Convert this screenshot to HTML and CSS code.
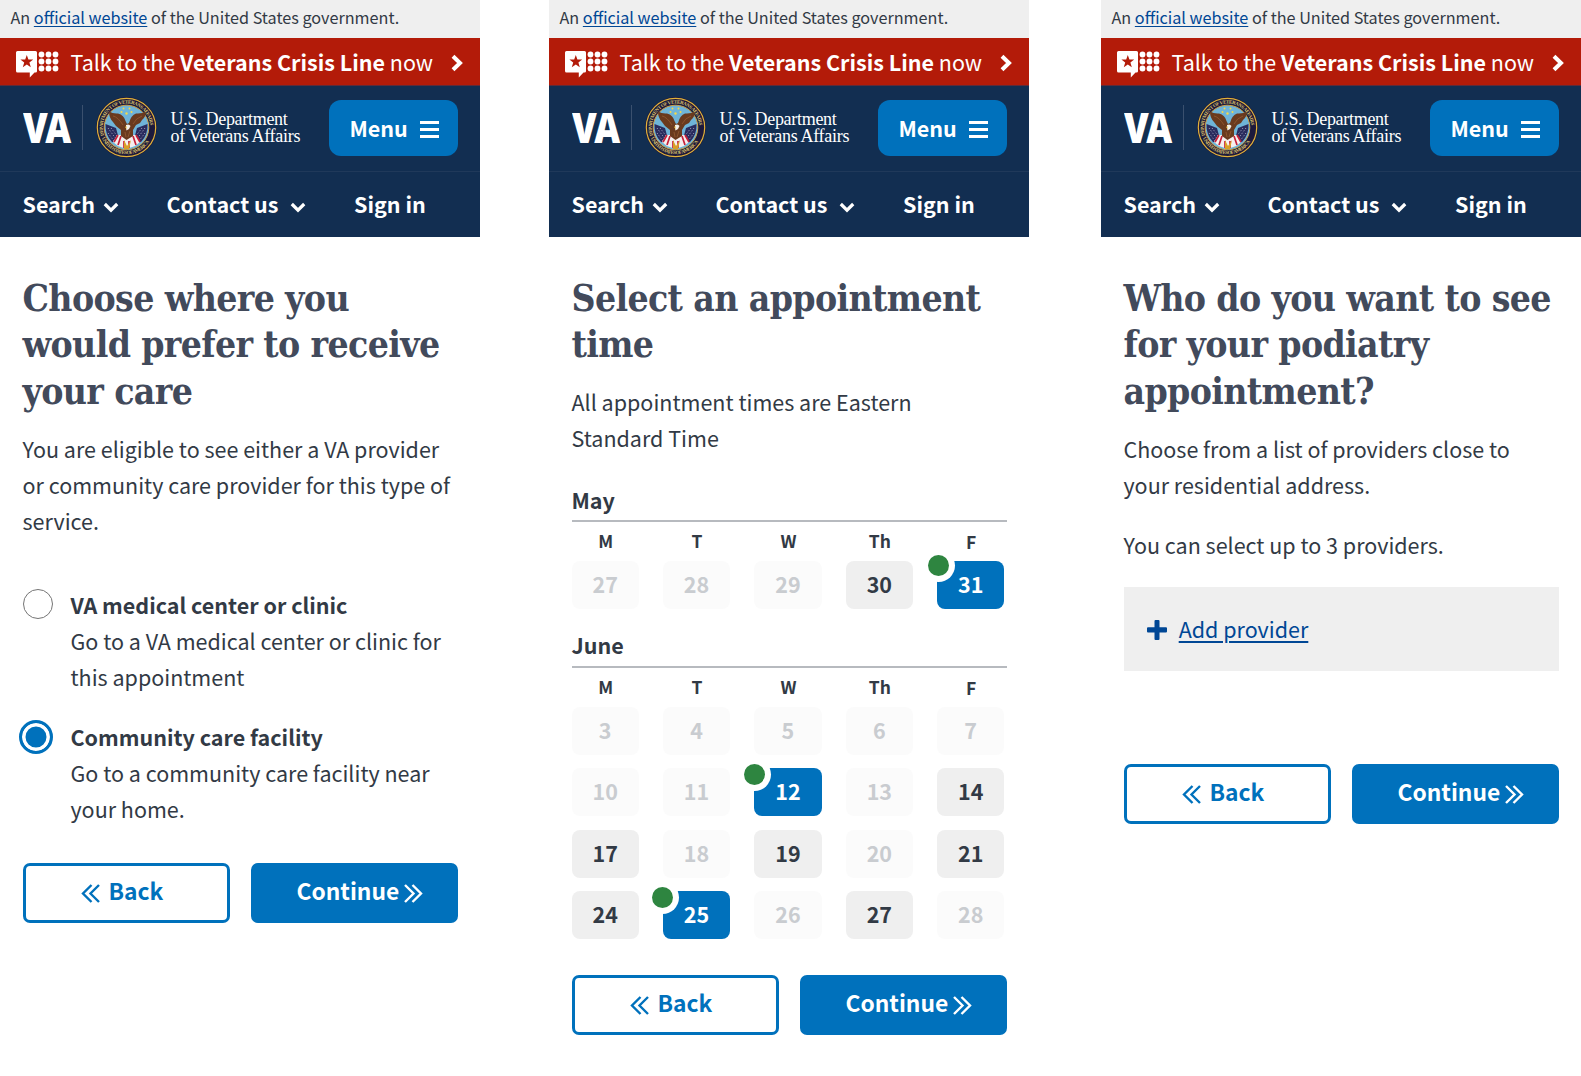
FILE: index.html
```html
<!DOCTYPE html>
<html lang="en">
<head>
<meta charset="utf-8">
<title>VA appointments</title>
<link rel="stylesheet" href="styles.css">
</head>
<body>
<svg class="sprite" aria-hidden="true">
  <defs>
    <path id="arc-top" d="M8.300 38.500A23.700 23.700 0 1 1 52.700 38.500"/>
    <path id="arc-bottom" d="M5.800 41A27 27 0 0 0 55.200 41"/>
  </defs>
  <symbol id="i-crisis" viewBox="0 0 43 27">
    <path fill="#fff" fill-rule="evenodd" d="M1.500 0H19.500Q21 0 21 1.500V20.200Q21 21.500 19.500 21.500H18.500L13.800 26.600V21.500H1.500Q0 21.500 0 20V1.500Q0 0 1.500 0ZM10.800 4L9.200 8.600H4.400L8.200 11.500L6.800 16.200L10.800 13.400L14.800 16.200L13.400 11.500L17.200 8.600H12.400Z"/>
    <g fill="#fff"><circle cx="25.500" cy="3.500" r="2.900"/><circle cx="32.500" cy="3.500" r="2.900"/><circle cx="39.500" cy="3.500" r="2.900"/><circle cx="25.500" cy="10.500" r="2.900"/><circle cx="32.500" cy="10.500" r="2.900"/><circle cx="39.500" cy="10.500" r="2.900"/><circle cx="25.500" cy="17.500" r="2.900"/><circle cx="32.500" cy="17.500" r="2.900"/><circle cx="39.500" cy="17.500" r="2.900"/></g>
  </symbol>
  <symbol id="i-right" viewBox="0 0 12 18"><path d="M2 2.200L9 9L2 15.800" fill="none" stroke="#fff" stroke-width="4"/></symbol>
  <symbol id="i-down" viewBox="0 0 16 11"><path d="M1.800 2L8 8.200L14.200 2" fill="none" stroke="#fff" stroke-width="3.200"/></symbol>
  <symbol id="i-menu" viewBox="0 0 19 17"><path d="M0 1.500H19M0 8.500H19M0 15.500H19" stroke="#fff" stroke-width="2.800"/></symbol>
  <symbol id="i-prev" viewBox="0 0 19 19"><path d="M10.500 1L2 9.500L10.500 18M18 1L9.500 9.500L18 18" fill="none" stroke="currentColor" stroke-width="2.400"/></symbol>
  <symbol id="i-next" viewBox="0 0 19 19"><path d="M1 1L9.500 9.500L1 18M8.500 1L17 9.500L8.500 18" fill="none" stroke="currentColor" stroke-width="2.400"/></symbol>
  <symbol id="i-seal" viewBox="0 0 61 61">
    <circle cx="30.500" cy="30.500" r="30.400" fill="#1d1a3c"/>
    <circle cx="30.500" cy="30.500" r="29.200" fill="none" stroke="#e0b23a" stroke-width="1.200"/>
    <circle cx="30.500" cy="30.500" r="22.300" fill="#6fb4d8" stroke="#c9a24a" stroke-width="1"/>
    <g fill="#f3d84a"><circle cx="27.500" cy="11.500" r="1"/><circle cx="33.500" cy="11.500" r="1"/><circle cx="25.500" cy="15" r="1"/><circle cx="35.500" cy="15" r="1"/><circle cx="30.500" cy="16.500" r="1.200"/></g>
    <path fill="#2a2c5e" d="M9.500 27L20 31L24 46L16 45Q9 38 9.500 27ZM51.500 27L41 31L37 46L45 45Q52 38 51.500 27Z"/>
    <path stroke="#e9ecf5" stroke-width=".7" stroke-dasharray="1 2" d="M12 31L20 42M12 36L18 44M15 31L22 40M49 31L41 42M49 36L43 44M46 31L39 40"/>
    <path fill="#f5eeee" d="M21 38L40 38L44 45L39 49L30.500 52L22 49L17 45Z"/>
    <path stroke="#c6203a" stroke-width="1.700" d="M22 38L18 45M25 39L22 48M28 44V51M33 44V51M37 39L40 48M40 38L44 45"/>
    <path fill="#d8a028" d="M28 43L31 49L35 43L33 52H28Z"/>
    <path fill="#6a3a1e" d="M13 14.500Q17 17 22 16.500Q28 18 29.500 24L31 27L33 26Q35 18 40 16.500Q46 17 50 14.500Q50 20 46 23L44 26L40 28L37 33L37 39L30.500 43L25 39L25 33L20 29L17 25Q13 21 13 14.500Z"/>
    <path fill="none" stroke="#9a5f34" stroke-width=".7" d="M17 19Q22 20 27 28M46 19Q40 21 37 27M29 35L30 40M34 34L32 40"/>
    <path fill="#f2efe9" d="M30 28Q33 26.500 34.500 29L33 32L30.500 33.500L30 31Z"/>
    <path fill="#e6b93c" d="M29 30L30.500 29V32Z"/>
  </symbol>
</svg>

<main class="board">
  <section class="phone tall">
    <div class="gov"><span>An <a href="#">official website</a> of the United States government.</span></div>
    <div class="crisis"><svg class="crisis-icon"><use href="#i-crisis"/></svg><span>Talk to the <b>Veterans Crisis Line</b> now</span><svg class="crisis-arrow"><use href="#i-right"/></svg></div>
    <header class="brand"><span class="va">VA</span><i class="rule"></i><svg class="seal" viewBox="0 0 61 61"><use href="#i-seal"/><text textLength="81"><textPath href="#arc-top">DEPARTMENT OF VETERANS AFFAIRS</textPath></text><text textLength="58"><textPath href="#arc-bottom">UNITED STATES OF AMERICA</textPath></text></svg><div class="dept"><div>U.S. Department</div><div>of Veterans Affairs</div></div><button class="menu">Menu<svg><use href="#i-menu"/></svg></button></header>
    <nav class="nav"><a>Search<svg><use href="#i-down"/></svg></a><a class="contact">Contact us<svg><use href="#i-down"/></svg></a><a>Sign in</a></nav>
    <div class="content">
      <h1>Choose where you<br>would prefer to receive<br>your care</h1>
      <p>You are eligible to see either a VA provider<br>or community care provider for this type of<br>service.</p>
      <div class="options">
        <div class="option"><i class="radio"></i><div><b>VA medical center or clinic</b><br>Go to a VA medical center or clinic for<br>this appointment</div></div>
        <div class="option"><i class="radio checked"></i><div><b>Community care facility</b><br>Go to a community care facility near<br>your home.</div></div>
      </div>
      <div class="actions"><button class="back"><svg><use href="#i-prev"/></svg>Back</button><button class="next">Continue<svg><use href="#i-next"/></svg></button></div>
    </div>
  </section>

  <section class="phone">
    <div class="gov"><span>An <a href="#">official website</a> of the United States government.</span></div>
    <div class="crisis"><svg class="crisis-icon"><use href="#i-crisis"/></svg><span>Talk to the <b>Veterans Crisis Line</b> now</span><svg class="crisis-arrow"><use href="#i-right"/></svg></div>
    <header class="brand"><span class="va">VA</span><i class="rule"></i><svg class="seal" viewBox="0 0 61 61"><use href="#i-seal"/><text textLength="81"><textPath href="#arc-top">DEPARTMENT OF VETERANS AFFAIRS</textPath></text><text textLength="58"><textPath href="#arc-bottom">UNITED STATES OF AMERICA</textPath></text></svg><div class="dept"><div>U.S. Department</div><div>of Veterans Affairs</div></div><button class="menu">Menu<svg><use href="#i-menu"/></svg></button></header>
    <nav class="nav"><a>Search<svg><use href="#i-down"/></svg></a><a class="contact">Contact us<svg><use href="#i-down"/></svg></a><a>Sign in</a></nav>
    <div class="content">
      <h1>Select an appointment<br>time</h1>
      <p>All appointment times are Eastern<br>Standard Time</p>
      <h2>May</h2>
      <div class="dow"><span>M</span><span>T</span><span>W</span><span>Th</span><span>F</span></div>
      <div class="days"><span class="off">27</span><span class="off">28</span><span class="off">29</span><span>30</span><span class="on first">31</span></div>
      <h2 class="june">June</h2>
      <div class="dow"><span>M</span><span>T</span><span>W</span><span>Th</span><span>F</span></div>
      <div class="days">
        <span class="off">3</span><span class="off">4</span><span class="off">5</span><span class="off">6</span><span class="off">7</span>
        <span class="off">10</span><span class="off">11</span><span class="on">12</span><span class="off">13</span><span>14</span>
        <span>17</span><span class="off">18</span><span>19</span><span class="off">20</span><span>21</span>
        <span>24</span><span class="on">25</span><span class="off">26</span><span>27</span><span class="off">28</span>
      </div>
      <div class="actions"><button class="back"><svg><use href="#i-prev"/></svg>Back</button><button class="next">Continue<svg><use href="#i-next"/></svg></button></div>
    </div>
  </section>

  <section class="phone tall last">
    <div class="gov"><span>An <a href="#">official website</a> of the United States government.</span></div>
    <div class="crisis"><svg class="crisis-icon"><use href="#i-crisis"/></svg><span>Talk to the <b>Veterans Crisis Line</b> now</span><svg class="crisis-arrow"><use href="#i-right"/></svg></div>
    <header class="brand"><span class="va">VA</span><i class="rule"></i><svg class="seal" viewBox="0 0 61 61"><use href="#i-seal"/><text textLength="81"><textPath href="#arc-top">DEPARTMENT OF VETERANS AFFAIRS</textPath></text><text textLength="58"><textPath href="#arc-bottom">UNITED STATES OF AMERICA</textPath></text></svg><div class="dept"><div>U.S. Department</div><div>of Veterans Affairs</div></div><button class="menu">Menu<svg><use href="#i-menu"/></svg></button></header>
    <nav class="nav"><a>Search<svg><use href="#i-down"/></svg></a><a class="contact">Contact us<svg><use href="#i-down"/></svg></a><a>Sign in</a></nav>
    <div class="content">
      <h1>Who do you want to see<br>for your podiatry<br>appointment?</h1>
      <p>Choose from a list of providers close to<br>your residential address.</p>
      <p class="second">You can select up to 3 providers.</p>
      <div class="add"><svg viewBox="0 0 20 20"><path d="M7.500 1Q7.500 0 8.500 0H11.500Q12.500 0 12.500 1V7.300H19Q20 7.300 20 8.300V11.500Q20 12.500 19 12.500H12.500V19Q12.500 20 11.500 20H8.500Q7.500 20 7.500 19V12.500H1Q0 12.500 0 11.500V8.300Q0 7.300 1 7.300H7.500Z" fill="#004795"/></svg><a href="#">Add provider</a></div>
      <div class="actions"><button class="back"><svg><use href="#i-prev"/></svg>Back</button><button class="next">Continue<svg><use href="#i-next"/></svg></button></div>
    </div>
  </section>
</main>
</body>
</html>
```
FILE: styles.css
```css
* { box-sizing: border-box; }

body {
  margin: 0;
  background: #fff;
  color: #323a45;
  font: 21.500px/36px "Noto Sans CJK SC", sans-serif;
}

.sprite { position: absolute; width: 0; height: 0; }
svg { display: block; flex: none; }
b { font-weight: 700; }
a { color: #004795; }

.board {
  display: grid;
  grid-template-columns: 480px 480px 480px;
  column-gap: 69px;
  width: 1581px;
  height: 1076px;
  overflow: hidden;
}
.phone { white-space: nowrap; }
.last { margin-left: 3px; margin-right: -3px; }

.gov {
  height: 38px;
  padding-left: 10.500px;
  background: #efefef;
  font-size: 16.200px;
  line-height: 35px;
}
.gov a { text-underline-offset: 2px; text-decoration-skip-ink: none; }

.crisis {
  display: flex;
  height: 48px;
  padding: 0 17px 0 16px;
  background: #b31b09;
  border-bottom: 1px solid #5f2a38;
  color: #fff;
  line-height: 47px;
}
.crisis span { margin-left: 11.500px; }
.crisis-icon { width: 43px; height: 27px; margin-top: 13px; }
.crisis-arrow { width: 12px; height: 18px; margin: 15.500px 0 0 auto; }

.brand {
  display: flex;
  height: 86px;
  padding: 0 22.500px;
  background: #122e51;
  border-bottom: 1px solid #20395a;
  color: #fff;
}
.va {
  width: 49px;
  margin-top: 20px;
  font: 800 42px/41px "Open Sans", sans-serif;
  letter-spacing: -3px;
  transform: scaleX(.85);
  transform-origin: left;
}
.rule { width: 1px; height: 45px; margin: 19px 13px 0 10.500px; background: #3a506e; }
.seal { width: 61px; height: 61px; margin-top: 11px; }
.seal text { fill: #dcc06a; font: 700 5px "Liberation Serif", serif; }
.dept {
  width: 130px;
  margin: 25px 0 0 13.500px;
  font: 18px/17px "Liberation Serif", serif;
  letter-spacing: -.3px;
}
.menu {
  display: flex;
  width: 129px;
  height: 56px;
  margin: 14px 0 0 auto;
  padding: 0 0 0 21px;
  gap: 12px;
  border: 0;
  border-radius: 12px;
  background: #0071bc;
  color: #fff;
  font: 700 21.500px/56px "Noto Sans CJK SC", sans-serif;
}
.menu svg { width: 19px; height: 17px; margin-top: 20.500px; }

.nav {
  display: grid;
  grid-template-columns: 144px 187.500px auto;
  height: 65px;
  padding-left: 22.500px;
  background: #122e51;
}
.nav a { display: flex; color: #fff; font-weight: 700; line-height: 64px; }
.nav svg { width: 16px; height: 11px; margin: 30px 0 0 8px; }
.nav .contact svg { margin-left: 12px; }

.content { padding: 38px 22.500px 0; }
h1 {
  margin: 0 0 16px;
  color: #424a5b;
  font: 700 37px/46.400px "DejaVu Serif Condensed", "DejaVu Serif", serif;
  letter-spacing: -.64px;
}
.tall h1 { margin-bottom: 17px; }
p { margin: 0; }
.second { margin-top: 24px; }

.options { display: grid; gap: 24px; margin-top: 48px; }
.option { display: grid; grid-template-columns: 48px auto; }
.radio { width: 30px; height: 30px; margin: 2px 0 0; border: 1.500px solid #757575; border-radius: 50%; }
.radio.checked {
  width: 34px;
  height: 34px;
  margin: 1px 0 0 -3.500px;
  border: 3px solid #0071bc;
  background: #0071bc;
  box-shadow: inset 0 0 0 3.500px #fff;
}

.actions { display: grid; grid-template-columns: 207px 207px; gap: 21px; margin-top: 36px; }
.last .actions { margin-top: 93px; }
.actions button {
  display: flex;
  height: 60px;
  border: 3px solid #0071bc;
  border-radius: 7px;
  font: 700 22.800px/50px "Noto Sans CJK SC", sans-serif;
}
.actions svg { width: 19px; height: 19px; margin-top: 17.500px; }
.actions .back { background: #fff; color: #0071bc; gap: 9px; padding: 0 0 0 55px; }
.actions .next { background: #0071bc; color: #fff; gap: 5px; padding: 0 0 0 43px; }

h2 {
  margin: 26px 0 0;
  padding-bottom: 2.500px;
  border-bottom: 2px solid #b7babf;
  font-size: 21.500px;
  font-weight: 700;
  line-height: 36px;
}
h2.june { margin-top: 17.700px; padding-bottom: 3px; }
.dow, .days {
  display: grid;
  grid-template-columns: repeat(5, 67.300px);
  column-gap: 24.100px;
  text-align: center;
  font-weight: 700;
}
.dow { height: 39px; font-size: 17.500px; line-height: 37px; }
.dow span { padding-left: 1px; }
.dow span:last-child { line-height: 39px; }
.days { row-gap: 13.400px; }
.days span { position: relative; height: 48px; border-radius: 8px; background: #efefef; line-height: 46px; }
.days .off { background: #fbfbfb; color: #c9ccd0; }
.days .on { background: #0071bc; color: #fff; }
.days .on::before {
  content: "";
  position: absolute;
  left: -10.500px;
  top: -4.500px;
  width: 21px;
  height: 21px;
  border-radius: 50%;
  background: #2e8540;
  box-shadow: 0 0 0 6px #fff;
}
.days .first::before { left: -9px; top: -6px; }

.add { display: flex; height: 84px; margin-top: 24px; padding: 24px 23.500px; background: #efefef; }
.add svg { width: 20px; height: 20px; margin-top: 8.500px; }
.add a { margin-left: 11.700px; text-underline-offset: 3px; }
```
